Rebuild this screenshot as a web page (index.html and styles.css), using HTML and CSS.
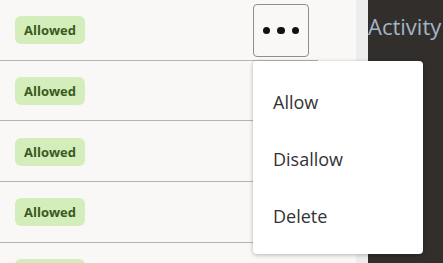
FILE: index.html
```html
<!DOCTYPE html>
<html lang="en">
<head>
<meta charset="utf-8">
<title>Rules</title>
<link rel="stylesheet" href="styles.css">
</head>
<body>
<div class="app">
  <div class="main">
    <div class="list">
      <div class="row">
        <span class="badge">Allowed</span>
        <button class="more" aria-label="More actions"><span class="dot"></span><span class="dot"></span><span class="dot"></span></button>
      </div>
      <div class="row"><span class="badge">Allowed</span></div>
      <div class="row"><span class="badge">Allowed</span></div>
      <div class="row"><span class="badge">Allowed</span></div>
      <div class="row"><span class="badge">Allowed</span></div>
    </div>
    <div class="menu" role="menu">
      <div class="item" role="menuitem">Allow</div>
      <div class="item" role="menuitem">Disallow</div>
      <div class="item" role="menuitem">Delete</div>
    </div>
  </div>
  <div class="strip"></div>
  <div class="side">
    <div class="side-title">Activity</div>
  </div>
</div>
</body>
</html>
```
FILE: styles.css
```css
html, body {
  margin: 0;
  padding: 0;
  height: 100%;
  overflow: hidden;
}
body {
  font-family: "Open Sans", "Noto Sans", sans-serif;
  background: #f9f8f7;
}
.app {
  display: flex;
  height: 263px;
  width: 443px;
  overflow: hidden;
}
.main {
  position: relative;
  width: 356px;
  flex: none;
  background: #f9f8f7;
}
.list {
  width: 318px;
  display: flex;
  flex-direction: column;
}
.row {
  box-sizing: border-box;
  height: 60.67px;
  border-bottom: 1px solid #b4b4b4;
  display: flex;
  align-items: center;
  justify-content: space-between;
  padding: 1px 9px 0 15px;
  flex: none;
}
.badge {
  box-sizing: border-box;
  height: 28px;
  width: 70px;
  border-radius: 6px;
  background: #d3edbb;
  color: #3b5a1c;
  font-weight: 700;
  font-size: 13px;
  display: flex;
  align-items: center;
  justify-content: center;
}
.more {
  box-sizing: border-box;
  width: 56px;
  height: 53px;
  border: 1px solid #8e8e8e;
  border-radius: 4px;
  background: #f9f8f7;
  display: flex;
  align-items: center;
  justify-content: center;
  gap: 7px;
  padding: 0;
}
.dot {
  width: 7.5px;
  height: 7.5px;
  border-radius: 50%;
  background: #111;
}
.menu {
  position: absolute;
  left: 253px;
  top: 61px;
  width: 170px;
  box-sizing: border-box;
  padding: 12px 0 9px;
  background: #fff;
  border-radius: 4px;
  box-shadow: 0 1px 4px rgba(0, 0, 0, 0.28);
  z-index: 2;
}
.item {
  height: 57.33px;
  display: flex;
  align-items: center;
  padding-left: 20px;
  font-size: 18px;
  color: #333333;
}
.strip {
  width: 12px;
  flex: none;
  background: #eeeded;
}
.side {
  flex: 1;
  background: #322e2b;
  overflow: hidden;
}
.side-title {
  color: #a4b4c6;
  font-size: 22px;
  padding-top: 11px;
  line-height: 30px;
  white-space: nowrap;
}
```
